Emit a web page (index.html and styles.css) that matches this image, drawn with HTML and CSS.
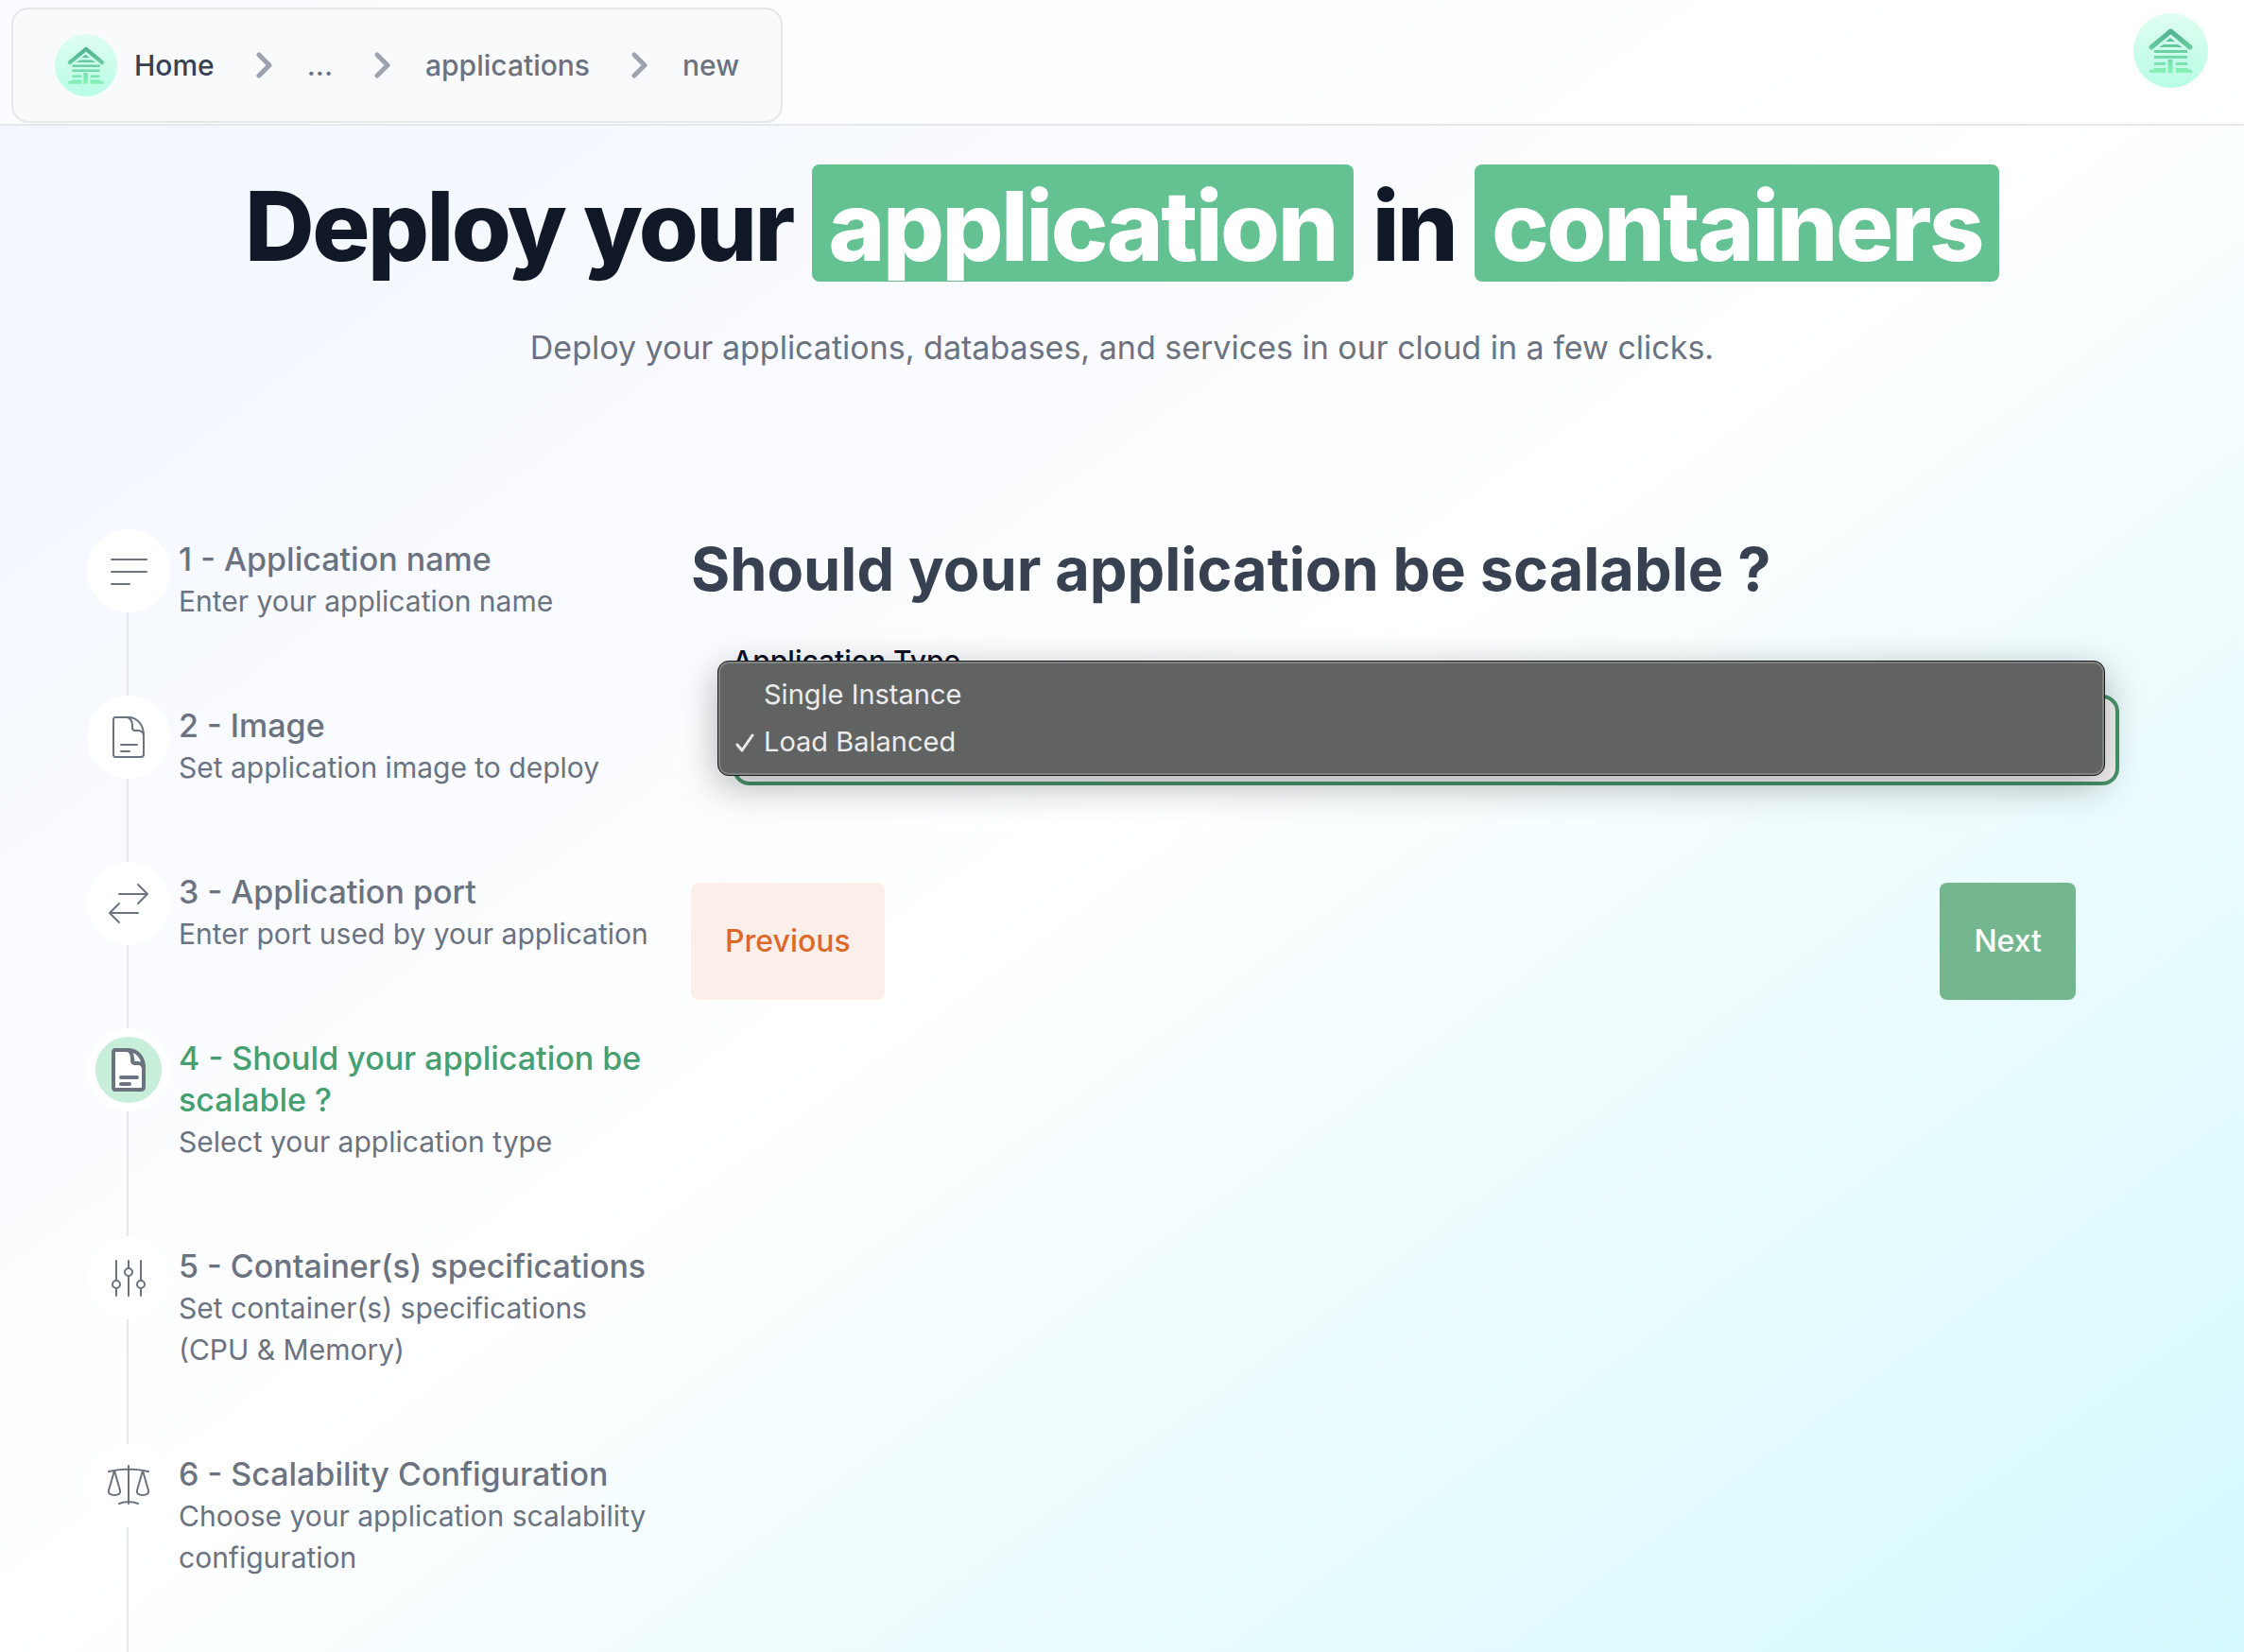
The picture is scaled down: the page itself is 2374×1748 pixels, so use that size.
FILE: index.html
```html
<!DOCTYPE html>
<html lang="en">
<head>
<meta charset="utf-8">
<title>New application</title>
<link rel="stylesheet" href="styles.css">
</head>
<body>
<svg class="sprite" aria-hidden="true">
  <defs>
    <linearGradient id="disc" x1="0" y1="0" x2="0" y2="1"><stop offset="0" stop-color="#dffdf0"/><stop offset="1" stop-color="#b8fde6"/></linearGradient>
    <linearGradient id="wood" gradientUnits="userSpaceOnUse" x1="0" y1="16" x2="0" y2="63"><stop offset="0" stop-color="#4fae8f"/><stop offset="1" stop-color="#86f2b6"/></linearGradient>
  </defs>
  <symbol id="logo" viewBox="0 0 79 79">
    <circle cx="39.5" cy="39.5" r="39.5" fill="url(#disc)"/>
    <path fill="none" stroke="url(#wood)" d="M19 36 39.500 19 60 36" stroke-width="5" stroke-linecap="round" stroke-linejoin="round"/>
    <path fill="url(#wood)" d="M39 26l5 4H34zM32 33h15l5 3H27zM22 39h35v3H22zM22 45h35v3H22zM22 52h12v3H22zM45 52h12v3H45zM17 60l5-1v-1h12v5H17zM45 58h12v1l5 1v3H45zM36.500 49h5v14h-5z"/>
  </symbol>
  <symbol id="doc" viewBox="0 0 36 46">
    <path d="M4 2H18C27 2 34 10 34 21V41Q34 44 31 44H4Q2 44 2 41V5Q2 2 4 2ZM17 2Q22 4 22 11V13Q22 16 25 16H28Q33 16 34 21M10 31H27M10 38H19"/>
  </symbol>
</svg>

<header class="topbar">
  <nav class="crumbs" aria-label="Breadcrumb">
    <a class="crumb crumb-home" href="#"><svg class="crumb-logo" aria-hidden="true"><use href="#logo"/></svg>Home</a>
    <svg class="chevron" viewBox="0 0 18 28" aria-hidden="true"><path d="M3 3 14 14 3 25"/></svg>
    <a class="crumb" href="#">...</a>
    <svg class="chevron" viewBox="0 0 18 28" aria-hidden="true"><path d="M3 3 14 14 3 25"/></svg>
    <a class="crumb" href="#">applications</a>
    <svg class="chevron" viewBox="0 0 18 28" aria-hidden="true"><path d="M3 3 14 14 3 25"/></svg>
    <a class="crumb" href="#">new</a>
  </nav>
  <a class="profile" href="#" aria-label="Profile"><svg aria-hidden="true"><use href="#logo"/></svg></a>
</header>

<main>
  <section class="hero">
    <h1>Deploy your <mark>application</mark> in <mark>containers</mark></h1>
    <p>Deploy your applications, databases, and services in our cloud in a few clicks.</p>
  </section>

  <div class="wizard">
    <ol class="steps">
      <li class="step">
        <span class="badge"><svg viewBox="0 0 44 44" aria-hidden="true"><path d="M4 10H41M4 23H41M4 36H23"/></svg></span>
        <div class="step-text"><h2>1 - Application name</h2><p>Enter your application name</p></div>
      </li>
      <li class="step">
        <span class="badge"><svg class="doc" aria-hidden="true"><use href="#doc"/></svg></span>
        <div class="step-text"><h2>2 - Image</h2><p>Set application image to deploy</p></div>
      </li>
      <li class="step">
        <span class="badge"><svg viewBox="0 0 44 44" aria-hidden="true"><path d="M12 12H42M32 2 42 12 32 22M32 32H2M12 22 2 32 12 42"/></svg></span>
        <div class="step-text"><h2>3 - Application port</h2><p>Enter port used by your application</p></div>
      </li>
      <li class="step step-active" aria-current="step">
        <span class="badge"><svg class="doc" aria-hidden="true"><use href="#doc"/></svg></span>
        <div class="step-text"><h2>4 - Should your application be scalable ?</h2><p>Select your application type</p></div>
      </li>
      <li class="step">
        <span class="badge"><svg viewBox="0 0 44 44" aria-hidden="true"><path d="M9 4V25M9 33V41M22 4V12M22 20V41M35 4V25M35 33V41"/><circle cx="9" cy="29" r="4"/><circle cx="22" cy="16" r="4"/><circle cx="35" cy="29" r="4"/></svg></span>
        <div class="step-text"><h2>5 - Container(s) specifications</h2><p>Set container(s) specifications (CPU &amp; Memory)</p></div>
      </li>
      <li class="step">
        <span class="badge"><svg viewBox="0 0 44 44" aria-hidden="true"><path d="M22 1V41M1 7Q22 2 43 7M12 41Q22 37 32 41M7 6 1 27Q0 32 7 32 14 32 13 27ZM37 6 31 27Q30 32 37 32 44 32 43 27Z"/></svg></span>
        <div class="step-text"><h2>6 - Scalability Configuration</h2><p>Choose your application scalability configuration</p></div>
      </li>
    </ol>

    <form class="panel">
      <h2 class="question">Should your application be scalable ?</h2>
      <div class="field">
        <label for="type">Application Type</label>
        <div class="picker">
          <select id="type"><option>Single Instance</option><option selected>Load Balanced</option></select>
          <ul class="menu" role="listbox" aria-label="Application Type">
            <li role="option">Single Instance</li>
            <li role="option" aria-selected="true"><svg class="tick" viewBox="0 0 20 20" aria-hidden="true"><path d="M2 12 7 18 18 2"/></svg>Load Balanced</li>
          </ul>
        </div>
      </div>
      <div class="actions">
        <button class="btn btn-prev" type="button">Previous</button>
        <button class="btn btn-next" type="submit">Next</button>
      </div>
    </form>
  </div>
</main>
</body>
</html>
```
FILE: styles.css
```css
* { box-sizing: border-box; margin: 0; padding: 0; }

body {
  min-height: 100vh;
  font-family: Inter, "Liberation Sans", sans-serif;
  font-size: 30px;
  line-height: 44px;
  color: #6b7280;
  background: linear-gradient(to bottom right, #f0f5ff, #ffffff 50%, #d3f8fd);
}

a { color: inherit; text-decoration: none; }
ol, ul { list-style: none; }
svg { display: block; fill: none; stroke-linecap: round; stroke-linejoin: round; }
.sprite { position: absolute; width: 0; height: 0; }

.topbar {
  display: flex;
  justify-content: space-between;
  align-items: flex-start;
  padding: 8px 38px 1px 12px;
  border-bottom: 2px solid #e5e7eb;
  background: rgba(255, 255, 255, 0.7);
}

.crumbs {
  display: flex;
  align-items: center;
  height: 122px;
  padding: 0 44px;
  border: 2px solid #e5e7eb;
  border-radius: 18px;
  background: #f9fafb;
  font-weight: 500;
}
.crumb-home { display: flex; align-items: center; gap: 18px; color: #374151; }
.crumb-logo { width: 66px; height: 66px; }
.chevron { width: 18px; height: 28px; margin: 0 36px 0 44px; stroke: #9ca3af; stroke-width: 5; }
.profile { margin-top: 6px; }
.profile svg { width: 79px; height: 79px; }

.hero { padding: 41px 44px 0; text-align: center; }
.hero h1 {
  font-size: 102px;
  line-height: 118px;
  font-weight: 800;
  letter-spacing: -0.025em;
  color: #111827;
}
.hero mark {
  display: inline-block;
  padding: 6px 18px 0;
  border-radius: 8px;
  color: #fff;
  background: #63c192;
}
.hero p { margin-top: 44px; font-size: 34px; line-height: 52px; }

.wizard { display: grid; grid-template-columns: 600px 1fr; gap: 39px; padding: 166px 92px 0; }

.step { position: relative; display: flex; gap: 9px; padding-bottom: 78px; }
.step::before {
  content: "";
  position: absolute;
  inset: 0 auto 0 42px;
  width: 2px;
  background: #e5e7eb;
}
.badge {
  position: relative;
  flex: none;
  display: flex;
  align-items: center;
  justify-content: center;
  width: 88px;
  height: 88px;
  border: 9px solid #fff;
  border-radius: 50%;
  background: #fff;
}
.badge svg { width: 44px; height: 44px; stroke: #6b7280; stroke-width: 2; }
.badge .doc { width: 36px; height: 46px; }
.step-text { margin-top: 10px; height: min-content; }
.step h2 { font-size: 34px; line-height: 44px; font-weight: 500; }
.step-active h2 { color: #469f70; }
.step-active .badge { background: #c6eed9; }
.step-active .badge svg { fill: #fff; stroke-width: 4; }

.question { font-size: 63px; line-height: 80px; font-weight: 700; color: #374151; }
.panel { padding-top: 2px; }
.field { margin: 35px 40px 0 44px; }
.field label { display: block; color: #0b1025; font-weight: 500; }
.picker { position: relative; margin-top: 14px; }
.picker select {
  display: block;
  appearance: none;
  width: 100%;
  height: 96px;
  padding: 0 32px;
  border: 4px solid #48966c;
  border-radius: 18px;
  background: #f9f6f7;
  font: inherit;
  color: #111827;
}
.menu {
  position: absolute;
  top: -36px;
  left: -16px;
  right: 15px;
  padding: 10px 16px;
  border: 1px solid #1a1c1b;
  border-radius: 12px;
  background: #606362;
  box-shadow: inset 0 0 0 2px #808382, 0 10px 40px rgba(0, 0, 0, 0.3);
  color: #ececec;
  font-size: 29px;
  line-height: 50px;
}
.menu li { position: relative; padding-left: 32px; }
.tick { position: absolute; top: 16px; left: 2px; width: 20px; height: 20px; stroke: #ececec; stroke-width: 3; }

.actions { display: flex; justify-content: space-between; margin: 103px 86px 0 0; }
.btn {
  height: 124px;
  padding: 0 36px;
  border: 0;
  border-radius: 8px;
  font: 500 32px/44px Inter, "Liberation Sans", sans-serif;
}
.btn-prev { color: #dc6829; background: #fcefea; }
.btn-next { color: #fff; background: #74b78f; }
```
